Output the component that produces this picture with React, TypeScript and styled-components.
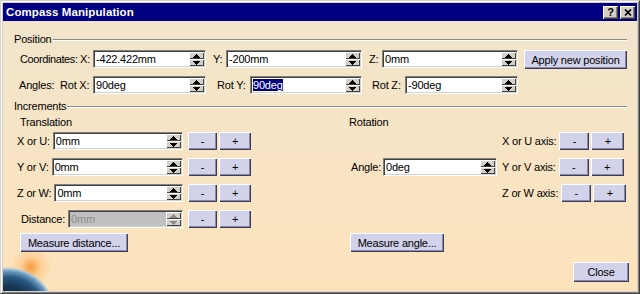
import React from "react";
import styled, { createGlobalStyle } from "styled-components";

const GlobalStyle = createGlobalStyle`
	html, body {
		margin: 0;
		padding: 0;
		background: #d4d0c8;
	}

	body {
		font-family: "Liberation Sans", Arial, sans-serif;
		font-size: 11px;
		letter-spacing: -0.2px;
		color: #000;
	}
`;

// pixel arrows for the spin buttons
const UP = "M3 0h1v1h1v1h1v1h1v1H0V3h1V2h1V1h1z";
const DOWN = "M0 0h7v1H6v1H5v1H4v1H3V3H2V2H1V1H0z";

const Arrow = ({ down, color }: { down?: boolean; color: string }) => (
	<svg width="7" height="4" viewBox="0 0 7 4" shapeRendering="crispEdges">
		<path d={down ? DOWN : UP} fill={color} />
	</svg>
);

interface SpinProps {
	value: string;
	w?: number;
	selected?: boolean;
	disabled?: boolean;
}

const Spin = ({ value, w, selected, disabled }: SpinProps): JSX.Element => (
	<Field.Frame $w={w} $disabled={disabled}>
		<Field.Text $disabled={disabled}>
			{selected ? <Field.Selection>{value}</Field.Selection> : value}
		</Field.Text>
		<Field.Spinner>
			<Field.SpinButton>
				<Arrow color={disabled ? "#8c8c8c" : "#000"} />
			</Field.SpinButton>
			<Field.SpinButton>
				<Arrow down color={disabled ? "#8c8c8c" : "#000"} />
			</Field.SpinButton>
		</Field.Spinner>
	</Field.Frame>
);

const translationRows = [
	{ label: "X or U:", indent: 0 },
	{ label: "Y or V:", indent: 0 },
	{ label: "Z or W:", indent: 0 },
];

const axisRows = [
	{ label: "X or U axis:", row: 1 },
	{ label: "Y or V axis:", row: 2 },
	{ label: "Z or W axis:", row: 3 },
];

const App = (): JSX.Element => {
	return (
		<>
			<GlobalStyle />
			<Window>
				<TitleBar>
					<Title>Compass Manipulation</Title>
					<TitleButtons>
						<TitleButton>?</TitleButton>
						<TitleButton>
							<svg width="8" height="7" viewBox="0 0 8 7">
								<path d="M1 0.5L7 6.5M7 0.5L1 6.5" stroke="#000" strokeWidth="1.7" />
							</svg>
						</TitleButton>
					</TitleButtons>
				</TitleBar>

				<Body>
					<GroupHeader>
						<span>Position</span>
						<Rule />
					</GroupHeader>

					<PosRow $mt={5} $pl={6}>
						<Caption $w={60} $tight>Coordinates:</Caption>
						<Caption $w={13}>X:</Caption>
						<Spin value="-422.422mm" w={113} />
						<Caption $w={20} $pl={7}>Y:</Caption>
						<Spin value="-200mm" w={136} />
						<Caption $w={20} $pl={7}>Z:</Caption>
						<Spin value="0mm" w={136} />
						<Button $w={103} $ml={6}>Apply new position</Button>
					</PosRow>

					<PosRow $mt={7} $pl={5}>
						<Caption $w={41}>Angles:</Caption>
						<Caption $w={33}>Rot X:</Caption>
						<Spin value="90deg" w={113} />
						<Caption $w={44} $pl={11}>Rot Y:</Caption>
						<Spin value="90deg" w={112} selected />
						<Caption $w={43} $pl={10}>Rot Z:</Caption>
						<Spin value="-90deg" w={113} />
					</PosRow>

					<GroupHeader $mt={4}>
						<span>Increments</span>
						<Rule />
					</GroupHeader>

					<Increments>
						<Column>
							<SubTitle $pl={3}>Translation</SubTitle>
							<RowStack>
								{translationRows.map((r) => (
									<TransRow key={r.label}>
										<LabeledField $w={166} $indent={r.indent}>
											<FieldLabel>{r.label}</FieldLabel>
											<Spin value="0mm" />
										</LabeledField>
										<IncButtons $ml={5}>
											<Button $w={29} $h={18}>-</Button>
											<Button $w={32} $h={18}>+</Button>
										</IncButtons>
									</TransRow>
								))}
								<TransRow>
									<LabeledField $w={166} $indent={4}>
										<FieldLabel>Distance:</FieldLabel>
										<Spin value="0mm" disabled />
									</LabeledField>
									<IncButtons $ml={5}>
										<Button $w={29} $h={18}>-</Button>
										<Button $w={32} $h={18}>+</Button>
									</IncButtons>
								</TransRow>
							</RowStack>
							<Button $w={108} $mt={5} $ml={3}>Measure distance...</Button>
						</Column>

						<Column>
							<SubTitle>Rotation</SubTitle>
							<RotGrid>
								{axisRows.map((r) => (
									<AxisRow key={r.label} $row={r.row}>
										<FieldLabel>{r.label}</FieldLabel>
										<IncButtons>
											<Button $w={30} $h={18}>-</Button>
											<Button $w={33} $h={18}>+</Button>
										</IncButtons>
									</AxisRow>
								))}
								<AngleField>
									<FieldLabel $mr={2}>Angle:</FieldLabel>
									<Spin value="0deg" w={114} />
								</AngleField>
							</RotGrid>
							<Button $w={94} $mt={5} $ml={1}>Measure angle...</Button>
						</Column>
					</Increments>

					<Footer>
						<Button $w={56} $h={20}>Close</Button>
					</Footer>
				</Body>
			</Window>
		</>
	);
};

export default App;

const Window = styled.div`
	width: 640px;
	height: 294px;
	box-sizing: border-box;
	display: flex;
	flex-direction: column;

	padding: 2px;
	border: 1px solid;
	border-color: #d4d0c8 #404040 #404040 #d4d0c8;
	box-shadow: inset 1px 1px #fff, inset -1px -1px #808080;
	background: #d4d0c8;
`;

const TitleBar = styled.div`
	display: flex;
	align-items: center;
	justify-content: space-between;
	flex: none;
	height: 18px;
	padding: 0 2px 0 3px;

	background: #000080;
`;

const Title = styled.span`
	color: #fff;
	font-weight: bold;
	font-size: 11.5px;
	letter-spacing: 0.1px;
	white-space: nowrap;
`;

const TitleButtons = styled.div`
	display: flex;
	gap: 2px;
`;

const TitleButton = styled.div`
	display: flex;
	align-items: center;
	justify-content: center;
	width: 15px;
	height: 13px;
	box-sizing: border-box;

	background: #d4d0c8;
	box-shadow: inset 1px 1px #fff, inset -1px -1px #404040, inset -2px -2px #808080;
	font-weight: bold;
	font-size: 11px;
	letter-spacing: 0;
	line-height: 13px;
`;

const Body = styled.div`
	flex: 1;
	display: flex;
	flex-direction: column;
	padding: 11px 10px 0 11px;

	background:
		radial-gradient(circle at 5px 294px, #0c1c30 0, #16344f 28px, #28587f 38px, #6e9ec2 44px, #a8c6dc 46px, rgba(250, 200, 140, 0) 48px),
		radial-gradient(circle at 28px 246px, rgba(246, 140, 40, 0.85) 0, rgba(251, 182, 100, 0.45) 10px, rgba(253, 227, 188, 0) 21px),
		linear-gradient(#f2e5cc, #fde3bc);
`;

const GroupHeader = styled.div<{ $mt?: number }>`
	display: flex;
	align-items: center;
	height: 13px;
	margin-top: ${(p) => p.$mt ?? 0}px;
	white-space: nowrap;
`;

const Rule = styled.div`
	flex: 1;
	margin: 2px 0 0 1px;

	border-top: 1px solid #8a8a8a;
	border-bottom: 1px solid #fff;
`;

const PosRow = styled.div<{ $mt: number; $pl: number }>`
	display: flex;
	align-items: flex-start;
	height: 19px;
	margin-top: ${(p) => p.$mt}px;
	padding-left: ${(p) => p.$pl}px;
`;

const Caption = styled.span<{ $w: number; $pl?: number; $tight?: boolean }>`
	flex: none;
	box-sizing: border-box;
	width: ${(p) => p.$w}px;
	padding-left: ${(p) => p.$pl ?? 0}px;

	line-height: 18px;
	white-space: nowrap;
	letter-spacing: ${(p) => (p.$tight ? "-0.4px" : "inherit")};
`;

const Field = {
	Frame: styled.div<{ $w?: number; $disabled?: boolean }>`
		display: flex;
		box-sizing: border-box;
		height: 18px;
		${(p) => (p.$w ? `width: ${p.$w}px; flex: none;` : "flex: 1; min-width: 0;")}
		padding: 1px;

		border: 1px solid;
		border-color: #808080 #fff #fff #808080;
		box-shadow: inset 1px 1px #404040, inset -1px -1px #d4d0c8;
		background: ${(p) => (p.$disabled ? "#c0c0c0" : "#fff")};
	`,

	Text: styled.div<{ $disabled?: boolean }>`
		flex: 1;
		min-width: 0;
		padding-left: 1px;
		overflow: hidden;

		line-height: 14px;
		white-space: nowrap;
		color: ${(p) => (p.$disabled ? "#8c8c8c" : "#000")};
	`,

	Selection: styled.span`
		background: #000080;
		color: #fff;
	`,

	Spinner: styled.div`
		display: flex;
		flex-direction: column;
		flex: none;
		width: 15px;
	`,

	SpinButton: styled.div`
		display: flex;
		align-items: center;
		justify-content: center;
		flex: 1;

		background: #d4d0c8;
		box-shadow: inset 1px 1px #fff, inset -1px -1px #404040;
	`,
};

const Button = styled.button<{ $w: number; $h?: number; $mt?: number; $ml?: number }>`
	flex: none;
	align-self: flex-start;
	box-sizing: border-box;
	width: ${(p) => p.$w}px;
	height: ${(p) => p.$h ?? 19}px;
	margin: ${(p) => p.$mt ?? 0}px 0 0 ${(p) => p.$ml ?? 0}px;
	padding: 0;

	border: none;
	background: #d2d2ea;
	box-shadow: inset 1px 1px #fff, inset -1px -1px #3c3c5a, inset -2px -2px #8a8aa8;
	font: inherit;
	letter-spacing: inherit;
	color: #000;
	white-space: nowrap;
`;

const Increments = styled.div`
	display: grid;
	grid-template-columns: 332px 1fr;
	margin-top: 4px;
	padding-left: 3px;
`;

const Column = styled.div`
	display: flex;
	flex-direction: column;
`;

const SubTitle = styled.div<{ $pl?: number }>`
	padding-left: ${(p) => p.$pl ?? 0}px;
	line-height: 13px;
`;

const RowStack = styled.div`
	display: grid;
	grid-template-rows: repeat(4, 18px);
	row-gap: 8px;
	margin-top: 3px;
`;

const TransRow = styled.div`
	display: flex;
	align-items: center;
`;

const LabeledField = styled.div<{ $w: number; $indent: number }>`
	display: flex;
	align-items: center;
	width: ${(p) => p.$w - p.$indent}px;
	margin-left: ${(p) => p.$indent}px;
`;

const FieldLabel = styled.span<{ $mr?: number }>`
	margin-right: ${(p) => p.$mr ?? 3}px;
	white-space: nowrap;
`;

const IncButtons = styled.div<{ $ml?: number }>`
	display: flex;
	gap: 2px;
	margin-left: ${(p) => p.$ml ?? 0}px;
`;

const RotGrid = styled.div`
	display: grid;
	grid-template-columns: 153px auto;
	grid-template-rows: repeat(4, 18px);
	row-gap: 8px;
	margin-top: 3px;
`;

const AxisRow = styled.div<{ $row: number }>`
	display: flex;
	align-items: center;
	grid-column: 2;
	grid-row: ${(p) => p.$row};
`;

const AngleField = styled.div`
	display: flex;
	align-items: center;
	grid-column: 1;
	grid-row: 2;
	margin-left: 2px;
`;

const Footer = styled.div`
	display: flex;
	justify-content: flex-end;
	margin: 10px -2px 0 0;
`;
